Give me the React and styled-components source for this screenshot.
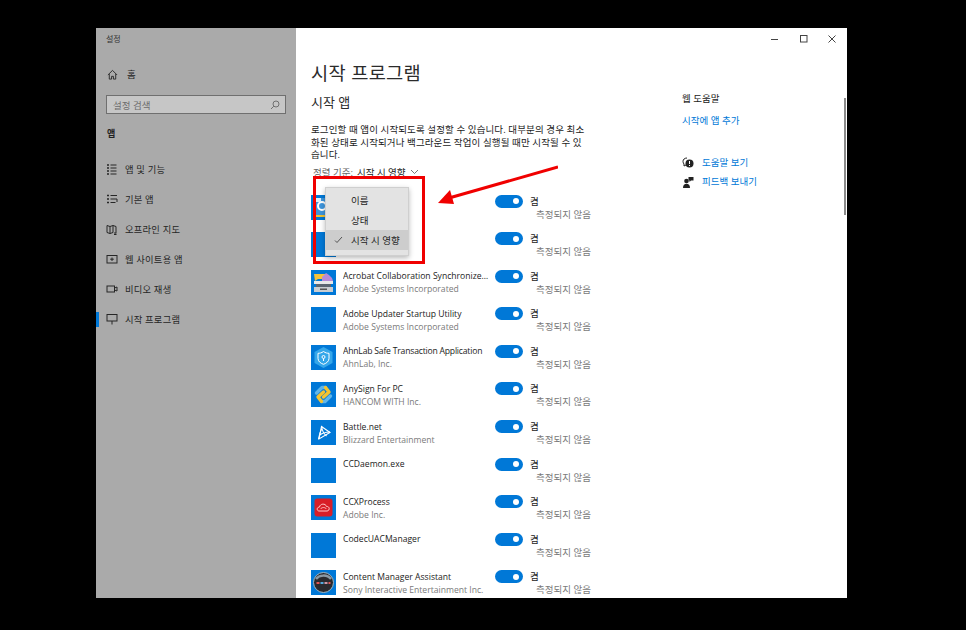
import React from 'react';
import styled, { createGlobalStyle } from 'styled-components';

const Global = createGlobalStyle`
  html, body { margin: 0; padding: 0; background: #000; }
  body { font-family: "Open Sans", "Noto Sans CJK KR", sans-serif; }
`;

const Page = styled.div`
  width: 966px;
  height: 630px;
  padding: 28px 119px 32px 96px;
  box-sizing: border-box;
  background: #000;
  overflow: hidden;
`;

const Window = styled.div`
  height: 570px;
  display: flex;
  background: #fff;
  position: relative;
  overflow: hidden;
`;

const Sidebar = styled.aside`
  width: 200px;
  flex: none;
  background: #aaaaaa;
  color: #222;
  display: flex;
  flex-direction: column;
`;

const WindowName = styled.div`
  font-size: 8px;
  line-height: 12px;
  padding: 5px 0 0 10px;
  color: #333;
`;

const NavHome = styled.div`
  display: flex;
  align-items: center;
  gap: 9px;
  height: 20px;
  margin-top: 19px;
  padding-left: 11px;
  font-size: 9.5px;
`;

const SearchBox = styled.div`
  height: 19px;
  margin: 11px 10px 0;
  border: 1px solid #6f6f6f;
  background: #c6c6c6;
  box-sizing: border-box;
  display: flex;
  align-items: center;
  justify-content: space-between;
  padding: 0 5px 0 6px;
  font-size: 9.5px;
  color: #6d6d6d;
`;

const SectionName = styled.div`
  font-size: 9px;
  font-weight: 700;
  padding-left: 11px;
  margin-top: 14px;
  line-height: 12px;
  height: 26px;
`;

const NavList = styled.div`
  display: flex;
  flex-direction: column;
`;

const NavItem = styled.div`
  height: 30px;
  display: flex;
  align-items: center;
  gap: 7px;
  padding-left: 10px;
  font-size: 9.3px;
  letter-spacing: 0.2px;
  position: relative;
  color: #262626;
  &::before {
    content: '';
    display: ${({ $active }) => ($active ? 'block' : 'none')};
    position: absolute;
    left: 0;
    top: 8px;
    width: 3px;
    height: 15px;
    background: #0078d7;
  }
`;

const Main = styled.main`
  width: 356px;
  flex: none;
  padding: 32px 0 0 15px;
  color: #222;
`;

const Title = styled.h1`
  margin: 0;
  font-size: 18.7px;
  font-weight: 400;
  line-height: 26px;
  letter-spacing: 0.3px;
  color: #2b2b2b;
`;

const Subtitle = styled.h2`
  margin: 7px 0 0;
  font-size: 13px;
  font-weight: 400;
  line-height: 18px;
  color: #2b2b2b;
`;

const Description = styled.p`
  margin: 13px 0 0;
  width: 277px;
  font-size: 9.5px;
  line-height: 12.5px;
  letter-spacing: 0.1px;
  word-break: break-all;
  color: #222;
`;

const SortLine = styled.div`
  margin: 3.5px 0 0 2px;
  height: 14px;
  display: flex;
  align-items: center;
  gap: 4px;
  font-size: 9.5px;
  color: #666;
  b { font-weight: 400; color: #222; }
`;

const AppList = styled.div`
  margin-top: 15.5px;
  display: flex;
  flex-direction: column;
`;

const AppRow = styled.div`
  height: 37.6px;
  flex: none;
  display: grid;
  grid-template-columns: 26px 146px 1fr;
  column-gap: 6px;
`;

const AppIcon = styled.div`
  width: 25px;
  height: 25px;
  background: #0078d7;
  display: flex;
  align-items: center;
  justify-content: center;
`;

const AppText = styled.div`
  min-width: 0;
`;

const AppName = styled.div`
  font-size: 8.6px;
  line-height: 13px;
  color: #222;
  white-space: nowrap;
  overflow: hidden;
  text-overflow: ellipsis;
  margin-top: 0.5px;
  letter-spacing: ${({ $tight }) => ($tight ? '-0.2px' : '0')};
`;

const Publisher = styled.div`
  font-size: 8.6px;
  line-height: 13px;
  color: #7a7a7a;
  white-space: nowrap;
`;

const StateCol = styled.div`
  display: grid;
  grid-template-columns: 28px auto;
  grid-template-rows: 13px 13px;
  column-gap: 7px;
  align-content: start;
  justify-content: start;
`;

const Toggle = styled.div`
  width: 28px;
  height: 13px;
  border-radius: 7px;
  background: #0078d7;
  position: relative;
  &::after {
    content: '';
    position: absolute;
    right: 4px;
    top: 3.5px;
    width: 6px;
    height: 6px;
    border-radius: 50%;
    background: #fff;
  }
`;

const OnLabel = styled.span`
  font-size: 9.5px;
  line-height: 13px;
  color: #222;
`;

const Impact = styled.span`
  grid-column: 1 / 3;
  font-size: 9.5px;
  line-height: 13px;
  color: #7a7a7a;
  padding-left: 41px;
  white-space: nowrap;
`;

const Aside = styled.aside`
  flex: 1;
  padding: 64px 0 0 15px;
  font-size: 9.5px;
`;

const AsideTitle = styled.div`
  line-height: 13px;
  color: #222;
`;

const AsideLink = styled.div`
  line-height: 13px;
  margin-top: 9px;
  color: #0078d7;
`;

const HelpList = styled.div`
  margin-top: 29px;
  display: flex;
  flex-direction: column;
  gap: 6px;
`;

const HelpRow = styled.div`
  height: 13px;
  display: flex;
  align-items: center;
  gap: 8px;
  color: #0078d7;
  line-height: 13px;
`;

const Controls = styled.div`
  position: absolute;
  top: 6px;
  right: 10px;
  display: flex;
  gap: 18.5px;
  align-items: center;
`;

const Scrollbar = styled.div`
  position: absolute;
  right: 1px;
  top: 70px;
  width: 2px;
  height: 117px;
  background: #8a8a8a;
`;

const Popup = styled.div`
  position: absolute;
  left: 229px;
  top: 159px;
  width: 84px;
  background: #e3e3e3;
  border: 1px solid #cfcfcf;
  box-sizing: border-box;
  box-shadow: 0 2px 5px rgba(0, 0, 0, 0.28);
  padding: 2px 0 5px;
`;

const PopupItem = styled.div`
  height: 20px;
  display: flex;
  align-items: center;
  padding-left: 25px;
  font-size: 9.5px;
  color: #222;
  position: relative;
  background: ${({ $selected }) => ($selected ? '#cdcdcd' : 'transparent')};
  svg { position: absolute; left: 8px; top: 6px; }
`;

const RedFrame = styled.div`
  position: absolute;
  left: 217px;
  top: 148px;
  width: 112px;
  height: 88px;
  box-sizing: border-box;
  border: 3px solid #f00000;
`;

const Arrow = styled.svg`
  position: absolute;
  left: 337px;
  top: 132px;
`;

const Glyph = ({ children, size = 12 }) => (
  <svg width={size} height={size} viewBox="0 0 12 12" fill="none" stroke="#262626" strokeWidth="1">
    {children}
  </svg>
);

const navItems = [
  { label: '앱 및 기능', icon: <><path d="M1 2h2M1 5h2M1 8h2M1 11h2" strokeWidth="1.6" /><path d="M4.5 2h6M4.5 5h6M4.5 8h6M4.5 11h6" /></> },
  { label: '기본 앱', icon: <><path d="M1 2.5h2M1 6h2M1 9.5h2" strokeWidth="1.6" /><path d="M4.5 2.5h6.5M4.5 6h6.5v3M4.5 9.5h5" /></> },
  { label: '오프라인 지도', icon: <><path d="M1 2.5l3 1 3-1 3 1v7M1 2.5v7l3 1 3-1M4 3.5v7M7 2.5v7" /><path d="M9 9v2.5M8 11.5h2.5" /></> },
  { label: '웹 사이트용 앱', icon: <><rect x="1" y="2.5" width="10" height="7.5" /><path d="M6 4.5v3.5M4.2 6.2h3.6" /></> },
  { label: '비디오 재생', icon: <><rect x="1" y="3" width="7.5" height="6" /><path d="M8.5 5l2.5-1v4l-2.5-1" /></> },
  { label: '시작 프로그램', active: true, icon: <><rect x="1" y="1.5" width="10" height="6.5" /><path d="M6 8v3.5" /></> },
];

const AcrobatIcon = () => (
  <svg width="25" height="25" viewBox="0 0 25 25">
    <path d="M3 4h11v5H7l-3 2z" fill="#f5c33b" />
    <path d="M11 7l4-4 3 2 3 3 1 3H11z" fill="#b78ad8" />
    <rect x="3" y="11" width="19" height="3" fill="#e8e8e8" />
    <rect x="5" y="14" width="15" height="3" fill="#5b6570" />
    <rect x="3" y="17" width="19" height="5" fill="#c9cdd1" />
    <rect x="9" y="18.5" width="7" height="1.5" fill="#555" />
  </svg>
);

const AhnLabIcon = () => (
  <svg width="25" height="25" viewBox="0 0 25 25">
    <path d="M12.5 2l9 5v11l-9 5-9-5V7z" fill="#35a7ea" />
    <path d="M12.5 6.5c2 1.5 4 1.8 5.5 1.8v5c0 3-2.5 5-5.500 6-3-1-5.500-3-5.500-6v-5c1.500 0 3.500-.3 5.500-1.800z" fill="none" stroke="#fff" strokeWidth="1" />
    <circle cx="12.5" cy="12" r="1.5" fill="none" stroke="#fff" />
    <path d="M12.5 13.5V16" stroke="#fff" />
  </svg>
);

const AnySignIcon = () => (
  <svg width="25" height="25" viewBox="0 0 25 25" fill="none" strokeWidth="3.4" strokeLinecap="round" strokeLinejoin="round">
    <path d="M14.5 5.5H11L5.5 11" stroke="#5fb6ea" />
    <path d="M10.5 19.5H14L19.5 14" stroke="#5fb6ea" />
    <path d="M12.5 10L7 15l3.5 4.5" stroke="#f4c430" />
    <path d="M12.5 15L18 10l-3.5-4.5" stroke="#f4c430" />
  </svg>
);

const BattleIcon = () => (
  <svg width="25" height="25" viewBox="0 0 25 25" fill="none" stroke="#fff" strokeWidth="1.1">
    <path d="M10.5 6.5L19 12.5 8 19z" />
    <path d="M10.5 6c.5 4 2.5 8 5 10M19 12c-4 0-8 1-11 3.5M7.5 19c.5-4 2-8 4-12" />
  </svg>
);

const CcIcon = () => (
  <svg width="25" height="25" viewBox="0 0 25 25">
    <rect x="3.5" y="3.5" width="18" height="18" rx="3" fill="#d81e27" />
    <path d="M8 16c-2.500 0-2.500-4 .5-4 .5-3.500 6-4 7-.5 3.500-.5 3.500 4.500.5 4.500z" fill="none" stroke="#ffc9c9" strokeWidth="1" />
    <path d="M9.5 14c1.500-2 4.500-2 6 0" fill="none" stroke="#ffc9c9" strokeWidth="0.9" />
  </svg>
);

const SonyIcon = () => (
  <svg width="25" height="25" viewBox="0 0 25 25">
    <circle cx="12.5" cy="12.5" r="10" fill="#2a2a2e" stroke="#9fb6c4" strokeWidth="1" />
    <path d="M5 9c3-4 11-5 15 0" fill="none" stroke="#8a98a3" strokeWidth="2.5" />
    <rect x="5.5" y="12" width="3" height="2" fill="#d55" />
    <rect x="9.5" y="12" width="3" height="2" fill="#5ad" />
    <rect x="13.5" y="12" width="3" height="2" fill="#c9a" />
    <rect x="17.5" y="12" width="2" height="2" fill="#d55" />
  </svg>
);

const StartupIcon = () => (
  <svg width="25" height="25" viewBox="0 0 25 25">
    <rect x="4" y="3" width="17" height="17" fill="#3e95dc" />
    <circle cx="11" cy="11" r="4" fill="none" stroke="#fff" strokeWidth="2" />
    <rect x="4" y="3" width="6" height="4" fill="#dff0fb" />
    <rect x="5" y="20" width="9" height="2" fill="#f2c230" />
  </svg>
);

const apps = [
  { icon: <StartupIcon /> },
  {},
  { name: 'Acrobat Collaboration Synchronizer 2019', pub: 'Adobe Systems Incorporated', icon: <AcrobatIcon /> },
  { name: 'Adobe Updater Startup Utility', pub: 'Adobe Systems Incorporated' },
  { name: 'AhnLab Safe Transaction Application', pub: 'AhnLab, Inc.', icon: <AhnLabIcon />, tight: true },
  { name: 'AnySign For PC', pub: 'HANCOM WITH Inc.', icon: <AnySignIcon /> },
  { name: 'Battle.net', pub: 'Blizzard Entertainment', icon: <BattleIcon /> },
  { name: 'CCDaemon.exe' },
  { name: 'CCXProcess', pub: 'Adobe Inc.', icon: <CcIcon /> },
  { name: 'CodecUACManager' },
  { name: 'Content Manager Assistant', pub: 'Sony Interactive Entertainment Inc.', icon: <SonyIcon /> },
];

export default function App() {
  return (
    <Page>
      <Global />
      <Window>
        <Sidebar>
          <WindowName>설정</WindowName>
          <NavHome>
            <Glyph size={11}><path d="M1 6.5L6 1.5l5 5M2.5 5.5V11h2.5V8h2v3h2.5V5.5" /></Glyph>
            홈
          </NavHome>
          <SearchBox>
            설정 검색
            <svg width="10" height="10" viewBox="0 0 10 10" fill="none" stroke="#666" strokeWidth="0.9">
              <circle cx="6" cy="4" r="3" />
              <path d="M3.8 6.2L1 9" />
            </svg>
          </SearchBox>
          <SectionName>앱</SectionName>
          <NavList>
            {navItems.map((item) => (
              <NavItem key={item.label} $active={item.active}>
                <Glyph>{item.icon}</Glyph>
                {item.label}
              </NavItem>
            ))}
          </NavList>
        </Sidebar>

        <Main>
          <Title>시작 프로그램</Title>
          <Subtitle>시작 앱</Subtitle>
          <Description>
            로그인할 때 앱이 시작되도록 설정할 수 있습니다. 대부분의 경우 최소화된 상태로 시작되거나 백그라운드 작업이 실행될 때만 시작될 수 있습니다.
          </Description>
          <SortLine>
            정렬 기준: <b>시작 시 영향</b>
            <svg width="9" height="6" viewBox="0 0 9 6" fill="none" stroke="#555" strokeWidth="0.8">
              <path d="M1 1l3.5 3.5L8 1" />
            </svg>
          </SortLine>
          <AppList>
            {apps.map((app, i) => (
              <AppRow key={i}>
                <AppIcon>{app.icon}</AppIcon>
                <AppText>
                  <AppName $tight={app.tight}>{app.name}</AppName>
                  <Publisher>{app.pub}</Publisher>
                </AppText>
                <StateCol>
                  <Toggle />
                  <OnLabel>켬</OnLabel>
                  <Impact>측정되지 않음</Impact>
                </StateCol>
              </AppRow>
            ))}
          </AppList>
        </Main>

        <Aside>
          <AsideTitle>웹 도움말</AsideTitle>
          <AsideLink>시작에 앱 추가</AsideLink>
          <HelpList>
            <HelpRow>
              <svg width="12" height="12" viewBox="0 0 12 12">
                <path d="M5 1C2.5 1 1 2.5 1 4.5 1 5.5 1.5 6.5 2 7v2l2-1" fill="none" stroke="#222" />
                <circle cx="7.5" cy="6.5" r="4" fill="#222" />
                <rect x="7" y="4" width="1" height="3" fill="#fff" />
                <rect x="7" y="8" width="1" height="1" fill="#fff" />
              </svg>
              도움말 보기
            </HelpRow>
            <HelpRow>
              <svg width="12" height="12" viewBox="0 0 12 12" fill="#222">
                <circle cx="4.5" cy="5" r="2.3" />
                <path d="M1 12c0-3 1.5-4.2 3.5-4.2S8 9 8 12z" />
                <path d="M6.5 1h5v3.5H9L7.5 6V4.5h-1z" />
              </svg>
              피드백 보내기
            </HelpRow>
          </HelpList>
        </Aside>

        <Controls>
          <svg width="10" height="10" viewBox="0 0 10 10" stroke="#444"><path d="M1 5.5h7" /></svg>
          <svg width="10" height="10" viewBox="0 0 10 10" fill="none" stroke="#444"><rect x="1.5" y="1.5" width="6.5" height="6.5" /></svg>
          <svg width="10" height="10" viewBox="0 0 10 10" stroke="#444"><path d="M1.5 1.5l7 7M8.5 1.5l-7 7" /></svg>
        </Controls>
        <Scrollbar />

        <Popup>
          <PopupItem>이름</PopupItem>
          <PopupItem>상태</PopupItem>
          <PopupItem $selected>
            <svg width="9" height="8" viewBox="0 0 9 8" fill="none" stroke="#333" strokeWidth="0.8"><path d="M1 4.5L3 6.5 8 1" /></svg>
            시작 시 영향
          </PopupItem>
        </Popup>
        <RedFrame />
        <Arrow width="125" height="48" viewBox="0 0 125 48">
          <path d="M125 7L16 38" stroke="#f00000" strokeWidth="3" />
          <path d="M5 43l12-13 4 14z" fill="#f00000" />
        </Arrow>
      </Window>
    </Page>
  );
}
